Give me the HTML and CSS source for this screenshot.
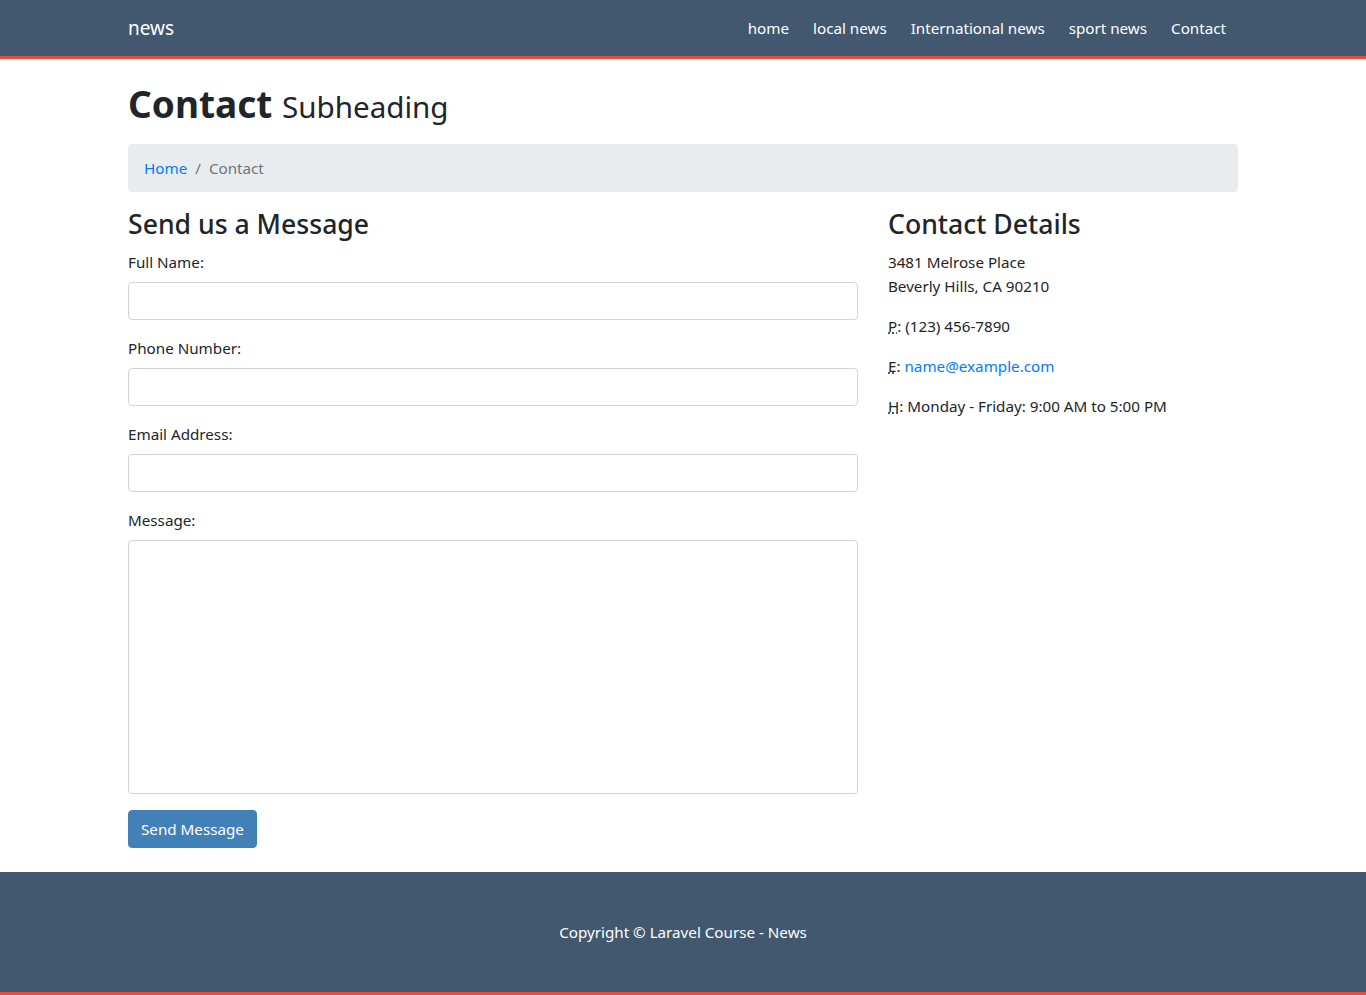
FILE: index.html
```html
<!DOCTYPE html>
<html lang="en">
<head>
<meta charset="utf-8">
<title>Contact</title>
<link rel="stylesheet" href="styles.css">
</head>
<body>
<nav class="navbar">
  <div class="container nav-inner">
    <a class="brand" href="#">news</a>
    <ul class="nav-links">
      <li><a href="#">home</a></li>
      <li><a href="#">local news</a></li>
      <li><a href="#">International news</a></li>
      <li><a href="#">sport news</a></li>
      <li><a href="#">Contact</a></li>
    </ul>
  </div>
</nav>

<main class="container">
  <h1 class="page-title">Contact <small>Subheading</small></h1>
  <ol class="breadcrumb">
    <li><a href="#">Home</a></li>
    <li class="sep">/</li>
    <li class="active">Contact</li>
  </ol>

  <div class="row">
    <section class="col-form">
      <h3>Send us a Message</h3>
      <form>
        <div class="form-group">
          <label>Full Name:</label>
          <input type="text" class="form-control">
        </div>
        <div class="form-group">
          <label>Phone Number:</label>
          <input type="tel" class="form-control">
        </div>
        <div class="form-group">
          <label>Email Address:</label>
          <input type="email" class="form-control">
        </div>
        <div class="form-group">
          <label>Message:</label>
          <textarea rows="10" class="form-control area"></textarea>
        </div>
        <button type="button" class="btn">Send Message</button>
      </form>
    </section>
    <aside class="col-details">
      <h3>Contact Details</h3>
      <p>3481 Melrose Place<br>Beverly Hills, CA 90210</p>
      <p><abbr title="Phone">P</abbr>: (123) 456-7890</p>
      <p><abbr title="Email">E</abbr>: <a href="#">name@example.com</a></p>
      <p><abbr title="Hours">H</abbr>: Monday - Friday: 9:00 AM to 5:00 PM</p>
    </aside>
  </div>
</main>

<footer class="footer">
  <p>Copyright &copy; Laravel Course - News</p>
</footer>
</body>
</html>
```
FILE: styles.css
```css
* { box-sizing: border-box; }
html, body { margin: 0; padding: 0; }
body {
  font-family: "Segoe UI", "Noto Sans", "Open Sans", sans-serif;
  font-size: 15.2px;
  line-height: 24px;
  color: #212529;
  background: #fff;
}
a { color: #007bff; text-decoration: none; }

.container {
  width: 1140px;
  margin: 0 auto;
  padding: 0 15px;
}

.navbar {
  background: #41586f;
  border-bottom: 3px solid #e74c3c;
  padding: 8px 0;
}
.nav-inner {
  display: flex;
  align-items: center;
  justify-content: space-between;
  height: 40px;
}
.brand {
  color: #fff;
  font-size: 19px;
  line-height: 30px;
  padding: 5px 0;
}
.nav-links {
  list-style: none;
  margin: 0;
  padding: 0;
  display: flex;
}
.nav-links a {
  display: block;
  color: #fff;
  padding: 8px 12px;
}

.page-title {
  font-size: 37px;
  font-weight: 700;
  line-height: 48px;
  margin: 21px 0 13px;
}
.page-title small {
  font-size: 29.6px;
  font-weight: 400;
}

.breadcrumb {
  list-style: none;
  display: flex;
  margin: 0 0 16px;
  padding: 12px 16px;
  background: #e9ecef;
  border-radius: 4px;
}
.breadcrumb .sep { color: #6c757d; padding: 0 8px; }
.breadcrumb .active { color: #6c757d; }

.row {
  display: flex;
  margin: 0 -15px;
}
.col-form { width: 760px; padding: 0 15px; }
.col-details { width: 380px; padding: 0 15px; }

h3 {
  font-size: 26.6px;
  font-weight: 500;
  line-height: 33.6px;
  margin: 0 0 8px;
}

.form-group { margin-bottom: 16px; }
label {
  display: block;
  margin-bottom: 8px;
}
.form-control {
  display: block;
  width: 100%;
  height: 38px;
  padding: 6px 12px;
  font: inherit;
  border: 1px solid #ced4da;
  border-radius: 4px;
  background: #fff;
}
.area { height: 254px; resize: none; }

.btn {
  font: inherit;
  color: #fff;
  background: #4280b8;
  border: 1px solid #4280b8;
  border-radius: 4px;
  padding: 6px 12px;
  height: 38px;
  margin-bottom: 24px;
}

.col-details p { margin: 0 0 16px; }
abbr {
  text-decoration: underline dotted;
  cursor: help;
}

.footer {
  background: #41586f;
  border-bottom: 3px solid #e74c3c;
  padding: 48px 0;
}
.footer p {
  margin: 0;
  text-align: center;
  color: #fff;
}
```
